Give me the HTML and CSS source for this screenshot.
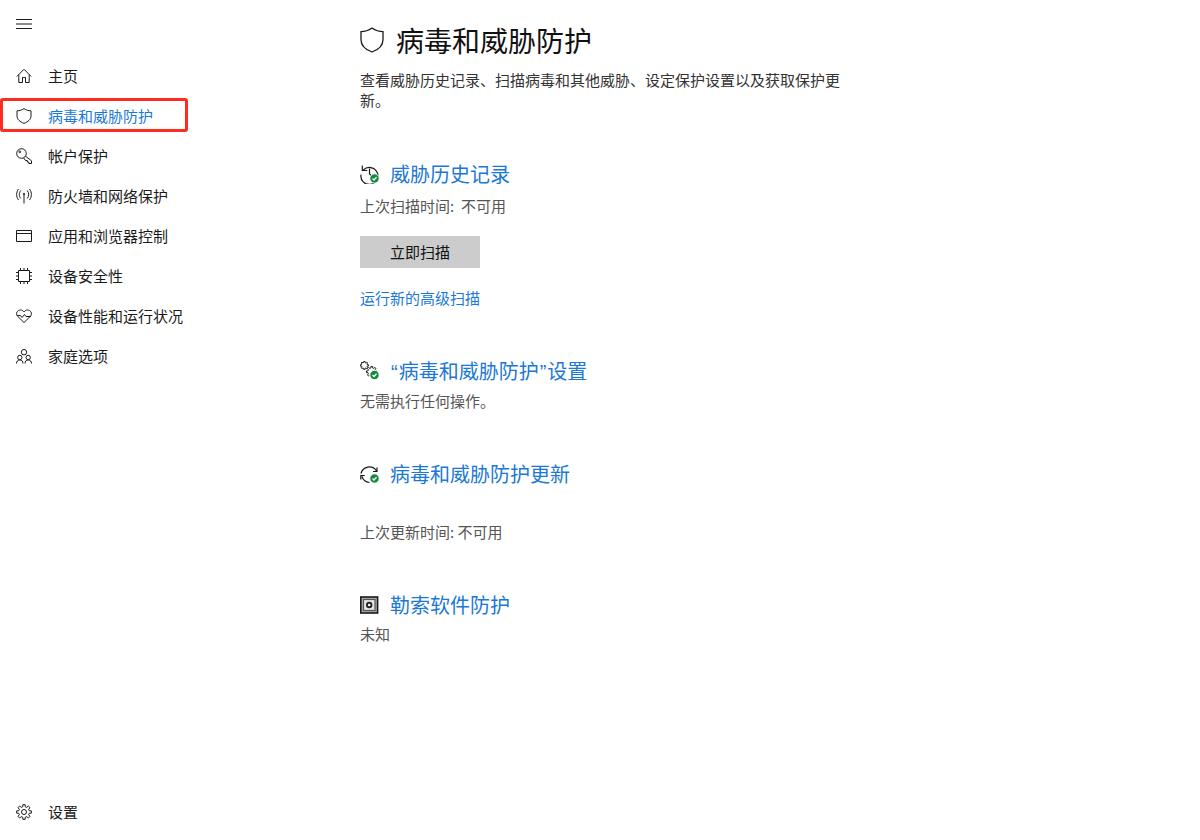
FILE: index.html
```html
<!DOCTYPE html>
<html lang="zh-CN">
<head>
<meta charset="utf-8">
<title>病毒和威胁防护</title>
<link rel="stylesheet" href="styles.css">
</head>
<body>
<div class="page">
  <aside class="sidebar">
    <div class="menu">
      <svg class="icon" viewBox="0 0 16 16"><path d="M0 3.500h16M0 8h16M0 12.500h16" /></svg>
    </div>
    <nav class="nav">
      <a class="nav-item"><svg class="icon" viewBox="0 0 16 16"><path d="M.8 8.500 8 1.300l7.200 7.200M2.800 6.800V14.500h3.700V9.500h3v5h3.700V6.800" /></svg><span>主页</span></a>
      <a class="nav-item active"><svg class="icon" viewBox="0 0 16 16"><path d="M8 .6c2.200 1.500 4.500 2.200 7 2.200v5c0 3.500-2.800 6-7 7.600-4.200-1.600-7-4.100-7-7.600v-5c2.500 0 4.800-.7 7-2.200z" /></svg><span>病毒和威胁防护</span><i class="highlight"></i></a>
      <a class="nav-item"><svg class="icon" viewBox="0 0 16 16"><circle cx="5.500" cy="5.500" r="4.800" /><circle cx="3.800" cy="3.800" r=".9" /><path d="M9.300 8l6.200 4.800v2.700h-2.700V14h-1.500v-1.500H9.500L7.500 9.800" /></svg><span>帐户保护</span></a>
      <a class="nav-item"><svg class="icon" viewBox="0 0 16 16"><path d="M8 7v8.500M4.800 2.500C2.800 5 2.800 8 4.800 10.500M11.200 2.500c2 2.500 2 5.500 0 8M2.500 1C0 4.500 0 8.500 2.500 12M13.500 1c2.500 3.500 2.500 7.500 0 11" /><circle cx="8" cy="6" r=".8" /></svg><span>防火墙和网络保护</span></a>
      <a class="nav-item"><svg class="icon" viewBox="0 0 16 16"><path d="M.5 2.500h15v11H.5zM.5 5.500h15" /></svg><span>应用和浏览器控制</span></a>
      <a class="nav-item"><svg class="icon" viewBox="0 0 16 16"><path d="M2.500 2.500h11v11h-11zM0 4.500h2.500M0 8h2.500M0 11.500h2.500M13.500 4.500H16M13.500 8H16M13.500 11.500H16M4.500 0v2.500M8 0v2.500M11.500 0v2.500M4.500 13.500V16M8 13.500V16M11.500 13.500V16" /></svg><span>设备安全性</span></a>
      <a class="nav-item"><svg class="icon" viewBox="0 0 16 16"><path d="M8 14.500 1.800 8.500C-1 5.500 1.500 2 4.500 2 6 2 7.200 2.800 8 4c.8-1.200 2-2 3.500-2 3 0 5.500 3.500 2.700 6.500z" /><path d="M1 7.500h3.500L6 9.500l2.500-3 1.500 2h5" /></svg><span>设备性能和运行状况</span></a>
      <a class="nav-item"><svg class="icon" viewBox="0 0 16 16"><circle cx="8" cy="4.200" r="2.700" /><circle cx="3.800" cy="9.500" r="2.200" /><circle cx="12.200" cy="9.500" r="2.200" /><path d="M.5 15.500c0-2.200 1.300-3.500 3.300-3.500S7 13.300 7 15.500M9 15.500c0-2.200 1.200-3.500 3.200-3.500s3.300 1.300 3.300 3.500" /></svg><span>家庭选项</span></a>
    </nav>
    <a class="nav-item settings"><svg class="icon" viewBox="0 0 16 16"><circle cx="8" cy="8" r="2.500" /><path d="M9.200.7V2.700L10.700 3.400 12.300 2 14 3.700 12.600 5.300 13.300 6.800H15.300V9.200H13.300L12.600 10.700 14 12.300 12.300 14 10.700 12.600 9.200 13.300V15.300H6.800V13.300L5.300 12.600 3.700 14 2 12.300 3.400 10.700 2.700 9.200H.7V6.800H2.700L3.400 5.300 2 3.700 3.700 2 5.300 3.400 6.800 2.700V.7z" /></svg><span>设置</span></a>
  </aside>
  <main class="main">
    <header class="header">
      <svg class="hero-icon" viewBox="0 0 24 26"><path d="M12 1c3.500 2.500 7 3.700 11 3.700v8c0 5.500-4 9.700-11 12.300C5 22.400 1 18.200 1 12.700v-8C5 4.700 8.500 3.500 12 1z" /></svg>
      <h1>病毒和威胁防护</h1>
    </header>
    <p class="intro">查看威胁历史记录、扫描病毒和其他威胁、设定保护设置以及获取保护更新。</p>

    <section class="section first">
      <div class="section-title">
        <svg class="sec-icon" viewBox="0 0 20 20"><path d="M3.300 6A8.500 8.500 0 1 1 1 10.500M2.300 1.500V6.500H7.300M9.500 4.500V10l3 3" /><circle class="badge" cx="14.500" cy="14.500" r="4.700" /><path class="tick" d="M12.500 14.500l1.500 1.500 2.500-2.800" /></svg>
        <h2>威胁历史记录</h2>
      </div>
      <p class="status">上次扫描时间:&nbsp; 不可用</p>
      <button class="scan-btn">立即扫描</button>
      <a class="link">运行新的高级扫描</a>
    </section>

    <section class="section settings-sec">
      <div class="section-title">
        <svg class="sec-icon" viewBox="0 0 20 20"><path class="gear" transform="scale(.55)" d="M9.200.7V2.700L10.700 3.400 12.300 2 14 3.700 12.600 5.300 13.300 6.800H15.300V9.200H13.300L12.600 10.700 14 12.300 12.300 14 10.700 12.600 9.200 13.300V15.300H6.800V13.300L5.300 12.600 3.700 14 2 12.300 3.400 10.700 2.700 9.200H.7V6.800H2.700L3.400 5.300 2 3.700 3.700 2 5.300 3.400 6.800 2.700V.7z" /><path class="gear" transform="translate(6 5) scale(.72)" d="M9.200.7V2.700L10.700 3.400 12.300 2 14 3.700 12.600 5.300 13.300 6.800H15.300V9.200H13.300L12.600 10.700 14 12.300 12.300 14 10.700 12.600 9.200 13.300V15.300H6.800V13.300L5.300 12.600 3.700 14 2 12.300 3.400 10.700 2.700 9.200H.7V6.800H2.700L3.400 5.300 2 3.700 3.700 2 5.300 3.400 6.800 2.700V.7z" /><circle class="badge" cx="14.500" cy="14" r="4.700" /><path class="tick" d="M12.500 14l1.500 1.500 2.500-2.800" /></svg>
        <h2><span class="latin">“</span>病毒和威胁防护<span class="latin">”</span>设置</h2>
      </div>
      <p class="status tight">无需执行任何操作。</p>
    </section>

    <section class="section update-sec">
      <div class="section-title">
        <svg class="sec-icon" viewBox="0 0 20 20"><path d="M1 9.500A8.500 8.500 0 0 1 16.500 7M17 3.500V7.500H13M2 12.500A8.500 8.500 0 0 0 9.500 18.500M.8 15.500V11.500H4.800" /><circle class="badge" cx="14.500" cy="14.500" r="4.700" /><path class="tick" d="M12.500 14.500l1.500 1.500 2.500-2.800" /></svg>
        <h2>病毒和威胁防护更新</h2>
      </div>
      <p class="status gap">上次更新时间: 不可用</p>
    </section>

    <section class="section ransom-sec">
      <div class="section-title">
        <svg class="sec-icon" viewBox="0 0 20 20"><rect x=".8" y="2" width="16.800" height="16" fill="#aaa" stroke-width="1.600" /><rect x="3.500" y="4.500" width="11.500" height="11" fill="#e6e6e6" stroke="#555" /><circle cx="9.200" cy="10" r="3.200" fill="#222" stroke="none" /><circle cx="9.200" cy="10" r="1.300" fill="#fff" stroke="none" /></svg>
        <h2>勒索软件防护</h2>
      </div>
      <p class="status ransom-status">未知</p>
    </section>
  </main>
</div>
</body>
</html>
```
FILE: styles.css
```css
* {
  box-sizing: border-box;
}

html,
body {
  margin: 0;
  padding: 0;
  background: #fff;
}

body {
  font-family: "Noto Sans CJK SC", "Liberation Sans", sans-serif;
  font-size: 15px;
  color: #1a1a1a;
}

.page {
  display: flex;
  width: 1200px;
  height: 840px;
  overflow: hidden;
}

.sidebar {
  display: flex;
  flex-direction: column;
  flex: 0 0 360px;
  height: 840px;
}

.icon {
  flex: none;
  width: 16px;
  height: 16px;
  fill: none;
  stroke: #1a1a1a;
  stroke-width: 1;
}

.menu {
  display: flex;
  align-items: center;
  height: 48px;
  padding-left: 16px;
}

.nav {
  display: flex;
  flex-direction: column;
  margin-top: 8px;
}

.nav-item {
  position: relative;
  display: flex;
  align-items: center;
  gap: 16px;
  height: 40px;
  padding-left: 16px;
  line-height: 20px;
  color: #1a1a1a;
}

.nav-item.active {
  color: #1b78d6;
}

.highlight {
  position: absolute;
  left: 0;
  top: 2px;
  width: 188px;
  height: 34px;
  border: 3px solid #ff2a20;
  border-radius: 3px;
}

.settings {
  margin-top: auto;
  margin-bottom: 8px;
}

.main {
  flex: 1;
  min-width: 0;
  padding-top: 18px;
}

.header {
  display: flex;
  align-items: center;
  gap: 12px;
  height: 44px;
}

.hero-icon {
  flex: none;
  width: 24px;
  height: 26px;
  margin-top: -1px;
  fill: none;
  stroke: #1a1a1a;
  stroke-width: 1.300;
}

h1 {
  margin: 0;
  font-size: 28px;
  font-weight: 400;
  line-height: 44px;
  color: #111;
}

.intro {
  width: 490px;
  margin: 8px 0 0;
  line-height: 20px;
  color: #333;
}

.section-title {
  display: flex;
  align-items: center;
  gap: 10px;
  height: 28px;
}

.sec-icon {
  flex: none;
  width: 20px;
  height: 20px;
  margin-top: -1px;
  fill: none;
  stroke: #1a1a1a;
  stroke-width: 1.200;
}

.gear {
  vector-effect: non-scaling-stroke;
  stroke-width: 1;
}

.badge {
  fill: #10893e;
  stroke: #fff;
  stroke-width: 1;
}

.tick {
  fill: none;
  stroke: #fff;
  stroke-width: 1.300;
}

h2 {
  margin: 0;
  font-size: 20px;
  font-weight: 400;
  line-height: 28px;
  color: #1b78d6;
}

.latin {
  padding: 0 1px;
  font-family: "Liberation Sans", sans-serif;
}

.status {
  margin: 8px 0 0;
  line-height: 20px;
  color: #555;
}

.section.first {
  margin-top: 50px;
}

.scan-btn {
  display: block;
  width: 120px;
  height: 32px;
  margin-top: 20px;
  padding: 0;
  border: 0;
  background: #ccc;
  font: inherit;
  line-height: 32px;
  color: #111;
}

.link {
  display: block;
  margin-top: 20px;
  line-height: 20px;
  color: #1b78d6;
}

.settings-sec {
  margin-top: 49px;
}

.status.tight {
  margin-top: 6px;
}

.update-sec {
  margin-top: 49px;
}

.status.gap {
  margin-top: 34px;
}

.ransom-sec {
  margin-top: 49px;
}

.status.ransom-status {
  margin-top: 5px;
}
```
